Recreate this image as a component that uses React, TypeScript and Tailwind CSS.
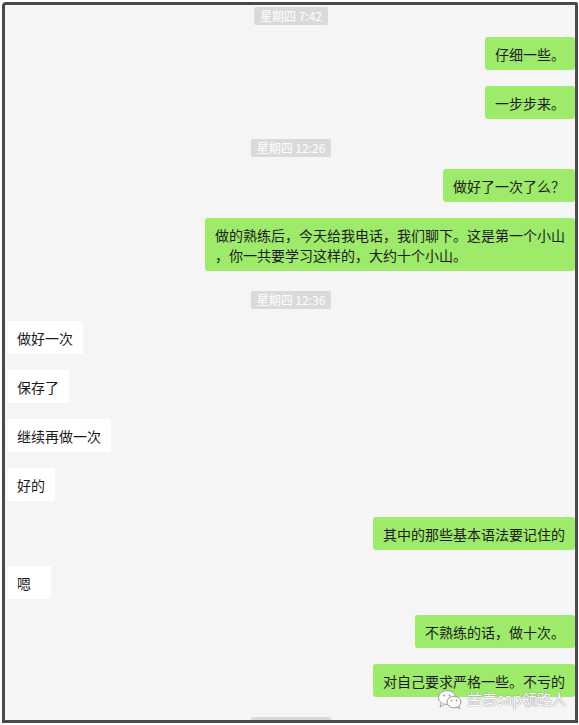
type Item =
  | { kind: "time"; text: string }
  | { kind: "me"; text: string; w?: string }
  | { kind: "them"; text: string; w?: string };

const ITEMS: Item[] = [
  { kind: "time", text: "星期四 7:42" },
  { kind: "me", text: "仔细一些。" },
  { kind: "me", text: "一步步来。" },
  { kind: "time", text: "星期四 12:26" },
  { kind: "me", text: "做好了一次了么？" },
  {
    kind: "me",
    text: "做的熟练后，今天给我电话，我们聊下。这是第一个小山\n，你一共要学习这样的，大约十个小山。",
  },
  { kind: "time", text: "星期四 12:36" },
  { kind: "them", text: "做好一次" },
  { kind: "them", text: "保存了" },
  { kind: "them", text: "继续再做一次" },
  { kind: "them", text: "好的" },
  { kind: "me", text: "其中的那些基本语法要记住的" },
  { kind: "them", text: "嗯", w: "w-[44px]" },
  { kind: "me", text: "不熟练的话，做十次。" },
  { kind: "me", text: "对自己要求严格一些。不亏的" },
  { kind: "time", text: "星期四 12:40" },
];

function TimeTag({ text, first }: { text: string; first: boolean }) {
  return (
    <div className={`flex justify-center ${first ? "mt-[2px]" : "mt-[20px]"}`}>
      <span className="rounded-[2px] bg-[#dadada] px-[6px] text-[12px] leading-[18px] text-white">
        {text}
      </span>
    </div>
  );
}

function Bubble({ item, afterTime }: { item: Item; afterTime: boolean }) {
  const mine = item.kind === "me";
  const w = item.kind !== "time" ? item.w ?? "" : "";
  return (
    <div
      className={`flex ${mine ? "justify-end" : "justify-start"} ${
        afterTime ? "mt-[12px]" : "mt-[16px]"
      }`}
    >
      <div
        className={`whitespace-pre-line rounded-[3px] px-[10px] pt-[7px] pb-[6px] text-[14px] leading-[20px] text-[#1b1b1b] ${w} ${
          mine ? "bg-[#9eea6a]" : "bg-white"
        }`}
      >
        {item.text}
      </div>
    </div>
  );
}

function WeChatMark() {
  return (
    <svg width="26" height="20" viewBox="0 0 26 20">
      <ellipse cx="10" cy="8.5" rx="8.5" ry="7" fill="#fff" stroke="#9a9a9a" strokeWidth="1" />
      <path d="M4 14 L3 18 L7.5 15.2" fill="#fff" stroke="#9a9a9a" strokeWidth="1" />
      <ellipse cx="17" cy="13" rx="7" ry="5.8" fill="#fff" stroke="#9a9a9a" strokeWidth="1" />
      <path d="M21.5 17 L23 19.5 L19 18.2" fill="#fff" stroke="#9a9a9a" strokeWidth="1" />
      <circle cx="7" cy="6.5" r="1" fill="#9a9a9a" />
      <circle cx="12.5" cy="6.5" r="1" fill="#9a9a9a" />
      <circle cx="14.5" cy="11.5" r="0.9" fill="#9a9a9a" />
      <circle cx="19.5" cy="11.5" r="0.9" fill="#9a9a9a" />
    </svg>
  );
}

export default function App() {
  return (
    <div
      className="min-h-screen bg-white pt-[2px] pl-[2px]"
      style={{ fontFamily: '"Microsoft YaHei", "Noto Sans CJK SC", "Noto Sans", sans-serif' }}
    >
      <div className="relative h-[721px] w-[576px] overflow-hidden rounded-tl-[4px] rounded-tr-[2px] border-[3px] border-[#4a4a4a] bg-[#f5f5f5]">
        <div className="flex flex-col pl-[2px]">
          {ITEMS.map((item, i) =>
            item.kind === "time" ? (
              <TimeTag key={i} text={item.text} first={i === 0} />
            ) : (
              <Bubble key={i} item={item} afterTime={ITEMS[i - 1]?.kind === "time"} />
            )
          )}
        </div>

        {/* watermark */}
        <div className="absolute left-[432px] top-[684px] flex items-center gap-[4px]">
          <WeChatMark />
          <span className="text-[15px] leading-[20px] text-white [text-shadow:0_0_1px_#8a8a8a,0_0_1px_#8a8a8a]">
            益泰sap领路人
          </span>
        </div>
      </div>
    </div>
  );
}
